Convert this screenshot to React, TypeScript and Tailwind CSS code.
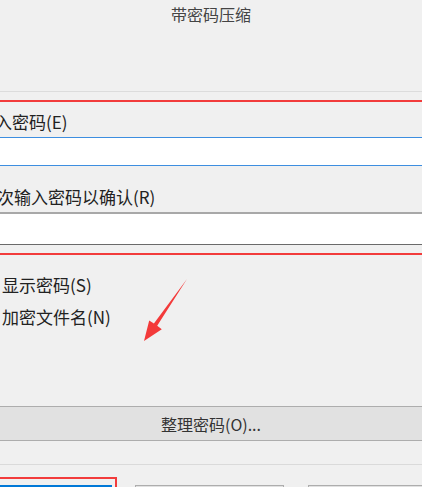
const FONT = "font-['Noto_Sans_CJK_SC','Noto_Sans',sans-serif]";

function Arrow() {
  // red annotation arrow pointing down-left at the options
  return (
    <svg className="pointer-events-none absolute left-0 top-0" width="422" height="487" viewBox="0 0 422 487">
      <polygon
        points="187,279 157.2,325.8 161.8,329.2 144,341 149.2,320.4 153.9,323.6"
        fill="#f33a3a"
      />
    </svg>
  );
}

export default function App() {
  return (
    <div className={`relative h-[487px] w-[422px] overflow-hidden bg-[#f0f0f0] ${FONT}`}>
      {/* Title */}
      <div className="flex h-[92px] justify-center border-b border-[#dcdcdc] pt-[3px]">
        <h1 className="text-[16px] leading-[22px] text-[#444]">带密码压缩</h1>
      </div>

      {/* Password fields (red highlight) */}
      <div className="mt-[8px] border-y-2 border-[#f23c3c] pb-[8px]">
        <div className="-ml-[22px] pt-[10px] pb-[5px] text-[17px] leading-[20px] text-[#222]">输入密码(E)</div>
        <div className="h-[29px] border-y border-[#3d8ee0] bg-white" />
        <div className="-ml-[20px] pt-[21px] pb-[5px] text-[17px] leading-[20px] text-[#222]">再次输入密码以确认(R)</div>
        <div className="h-[33px] border-t-2 border-b border-t-[#a8a8a8] border-b-[#6a6a6a] bg-white" />
      </div>

      {/* Options */}
      <div className="mt-[20px] flex flex-col gap-[12px] pl-[2px] text-[17px] leading-[20px] text-[#222]">
        <span>显示密码(S)</span>
        <span>加密文件名(N)</span>
      </div>

      <button className="mt-[79px] flex h-[35px] w-full items-center justify-center border-y border-[#adadad] bg-[#e1e1e1] text-[16px] text-[#333]">
        整理密码(O)...
      </button>

      {/* Footer buttons */}
      <div className="mt-[23px] border-t border-[#dadada] pt-[12px]">
        <div className="flex items-start">
          <div className="h-[30px] w-[117px] shrink-0 border-t-2 border-r-2 border-[#f23c3c] pt-[6px] pr-[3px]">
            <div className="h-full border-2 border-[#0078d7] bg-[#e1e1e1]" />
          </div>
          <div className="ml-[18px] mt-[8px] h-[24px] w-[149px] shrink-0 border border-[#adadad] bg-[#e1e1e1]" />
          <div className="ml-[24px] mt-[8px] h-[24px] w-[130px] shrink-0 border border-[#adadad] bg-[#e1e1e1]" />
        </div>
      </div>

      <Arrow />
    </div>
  );
}
